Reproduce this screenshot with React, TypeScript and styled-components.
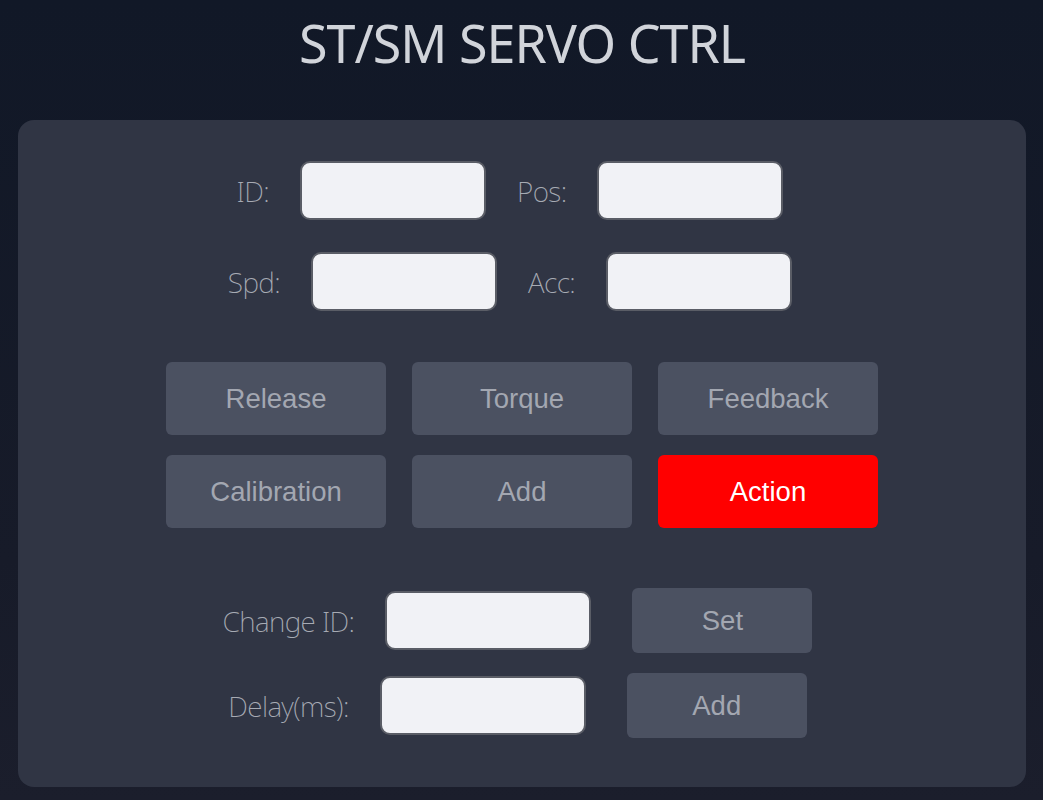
import React from "react";
import styled, { createGlobalStyle } from "styled-components";

const Global = createGlobalStyle`
  html, body { margin: 0; padding: 0; }
  body {
    background: linear-gradient(180deg, #111827 0%, #171b29 70%, #1b1e2c 100%);
    min-height: 800px;
    font-family: "Noto Sans", "Liberation Sans", sans-serif;
  }
`;

const Page = styled.div`
  width: 1043px;
  height: 800px;
  box-sizing: border-box;
  padding: 0 17px 13px 18px;
  display: flex;
  flex-direction: column;
`;

const Title = styled.h1`
  margin: 0;
  height: 120px;
  display: flex;
  align-items: center;
  justify-content: center;
  padding-bottom: 36px;
  box-sizing: border-box;
  font-family: "Noto Sans", sans-serif;
  font-weight: 400;
  font-size: 52px;
  color: #d1d4da;
  letter-spacing: -1px;
`;

const Card = styled.div`
  flex: 1;
  background: #303544;
  border-radius: 16px;
  padding: 41px 0 0;
  display: flex;
  flex-direction: column;
  align-items: center;
`;

const FieldRow = styled.div<{ $shift?: number; $gap?: number }>`
  display: flex;
  align-items: center;
  gap: 31px;
  margin-left: ${(p) => p.$shift ?? 0}px;
  margin-bottom: ${(p) => p.$gap ?? 0}px;
`;

const Label = styled.label`
  font-family: "Noto Sans", sans-serif;
  font-weight: 200;
  font-size: 28px;
  letter-spacing: -0.6px;
  color: #a7abb4;
  white-space: nowrap;
`;

const Input = styled.input<{ $w?: number }>`
  width: ${(p) => p.$w ?? 186}px;
  height: 59px;
  box-sizing: border-box;
  border: 2px solid #5a5d66;
  border-radius: 10px;
  background: #f1f2f6;
  outline: none;
  padding: 0 10px;
  font-size: 20px;
`;

const Grid = styled.div`
  display: grid;
  grid-template-columns: repeat(3, 220px);
  grid-auto-rows: 73px;
  column-gap: 26px;
  row-gap: 20px;
  margin-top: 51px;
  margin-bottom: 60px;
`;

const Button = styled.button<{ $primary?: boolean; $w?: number; $h?: number }>`
  width: ${(p) => (p.$w ? `${p.$w}px` : "100%")};
  height: ${(p) => (p.$h ? `${p.$h}px` : "100%")};
  border: none;
  border-radius: 6px;
  background: ${(p) => (p.$primary ? "#ff0000" : "#4b5161")};
  color: ${(p) => (p.$primary ? "#ffffff" : "#a3a7b1")};
  font-family: "Liberation Sans", Arial, sans-serif;
  font-size: 27.5px;
  cursor: pointer;
  padding: 0;
`;

const BottomRow = styled.div<{ $shift: number; $gap?: number }>`
  display: flex;
  align-items: center;
  margin-left: ${(p) => p.$shift}px;
  margin-bottom: ${(p) => p.$gap ?? 0}px;
`;

const BottomLabel = styled(Label)`
  margin-right: 31px;
`;

const BottomInput = styled(Input)`
  margin-right: 41px;
`;

export default function App() {
  return (
    <>
      <Global />
      <Page>
        <Title>ST/SM SERVO CTRL</Title>
        <Card>
          <FieldRow $shift={-24} $gap={32}>
            <Label>ID:</Label>
            <Input />
            <Label>Pos:</Label>
            <Input />
          </FieldRow>
          <FieldRow $shift={-24}>
            <Label>Spd:</Label>
            <Input />
            <Label>Acc:</Label>
            <Input />
          </FieldRow>
          <Grid>
            <Button>Release</Button>
            <Button>Torque</Button>
            <Button>Feedback</Button>
            <Button>Calibration</Button>
            <Button>Add</Button>
            <Button $primary>Action</Button>
          </Grid>
          <BottomRow $shift={-9} $gap={20}>
            <BottomLabel>Change ID:</BottomLabel>
            <BottomInput $w={206} />
            <Button $w={180} $h={65}>Set</Button>
          </BottomRow>
          <BottomRow $shift={-9}>
            <BottomLabel>Delay(ms):</BottomLabel>
            <BottomInput $w={206} />
            <Button $w={180} $h={65}>Add</Button>
          </BottomRow>
        </Card>
      </Page>
    </>
  );
}
